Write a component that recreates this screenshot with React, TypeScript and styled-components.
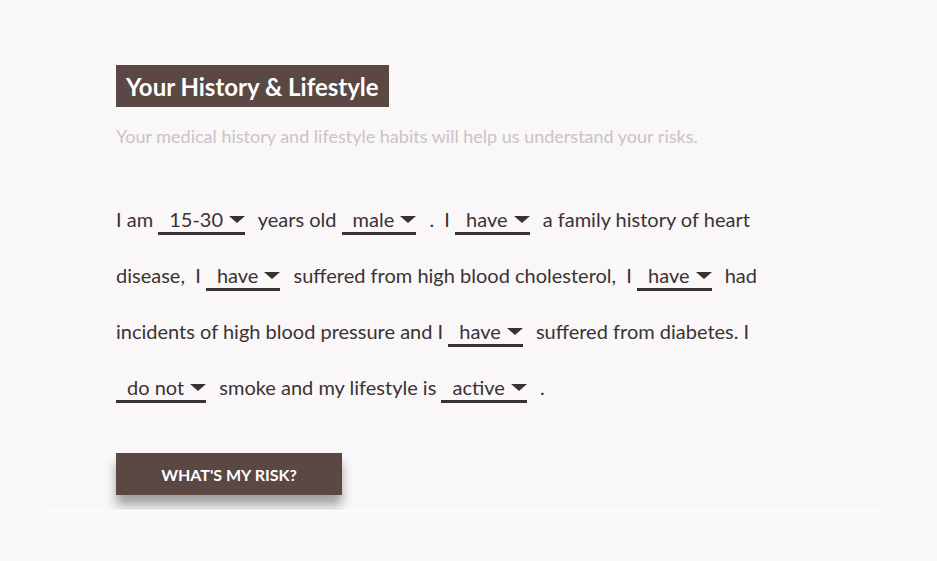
import React from "react";
import styled, { createGlobalStyle } from "styled-components";

const GlobalStyle = createGlobalStyle`
  body {
    margin: 0;
    background: #f9f7f8;
    font-family: Lato, "Open Sans", sans-serif;
    color: #3b3333;
  }
`;

const Page = styled.div`
  padding: 0 52px 0 43px;
`;

const Panel = styled.section`
  padding: 65px 73px 15px;
  overflow: hidden;
  border-bottom: 1px solid #ffffff;
`;

const Title = styled.h2`
  display: inline-block;
  margin: 0;
  padding: 0 10px;
  height: 42px;
  line-height: 44px;
  background: #5b4743;
  color: #ffffff;
  font-size: 24px;
  font-weight: 700;
`;

const Subtitle = styled.p`
  margin: 17px 0 0;
  font-size: 18px;
  line-height: 24px;
  color: #cbc3c4;
`;

const Sentence = styled.p`
  margin: 43px 0 0;
  max-width: 652px;
  font-size: 20px;
  line-height: 56px;
`;

const Select = styled.span`
  display: inline-flex;
  align-items: center;
  gap: 6px;
  margin-right: 8px;
  padding: 0 0 1px 11px;
  line-height: 24px;
  border-bottom: 3px solid #3a3232;
  cursor: pointer;
`;

const Caret = styled.span`
  width: 0;
  height: 0;
  border-left: 8px solid transparent;
  border-right: 8px solid transparent;
  border-top: 7px solid #3a3232;
  margin-top: 1px;
`;

const RiskButton = styled.button`
  display: block;
  margin-top: 38px;
  width: 226px;
  height: 42px;
  border: 0;
  background: #5b4743;
  color: #ffffff;
  font-family: Lato, sans-serif;
  font-size: 16px;
  font-weight: 700;
  text-transform: uppercase;
  box-shadow: 0 10px 10px rgba(0, 0, 0, 0.35);
  cursor: pointer;
`;

const Choice = ({ value }: { value: string }) => (
    <Select>
        {value}
        <Caret/>
    </Select>
);

const App = () => {
    return (
        <Page>
            <GlobalStyle/>
            <Panel>
                <Title>Your History &amp; Lifestyle</Title>
                <Subtitle>Your medical history and lifestyle habits will help us understand your risks.</Subtitle>
                <Sentence>
                    I am <Choice value="15-30"/> years old <Choice value="male"/> . &nbsp;I <Choice value="have"/> a family
                    history of heart disease, &nbsp;I <Choice value="have"/> suffered from high blood cholesterol,
                    &nbsp;I <Choice value="have"/> had incidents of high blood pressure and I <Choice value="have"/> suffered
                    from diabetes. I <Choice value="do not"/> smoke and my lifestyle is <Choice value="active"/> .
                </Sentence>
                <RiskButton>What's my risk?</RiskButton>
            </Panel>
        </Page>
    );
};

export default App;
